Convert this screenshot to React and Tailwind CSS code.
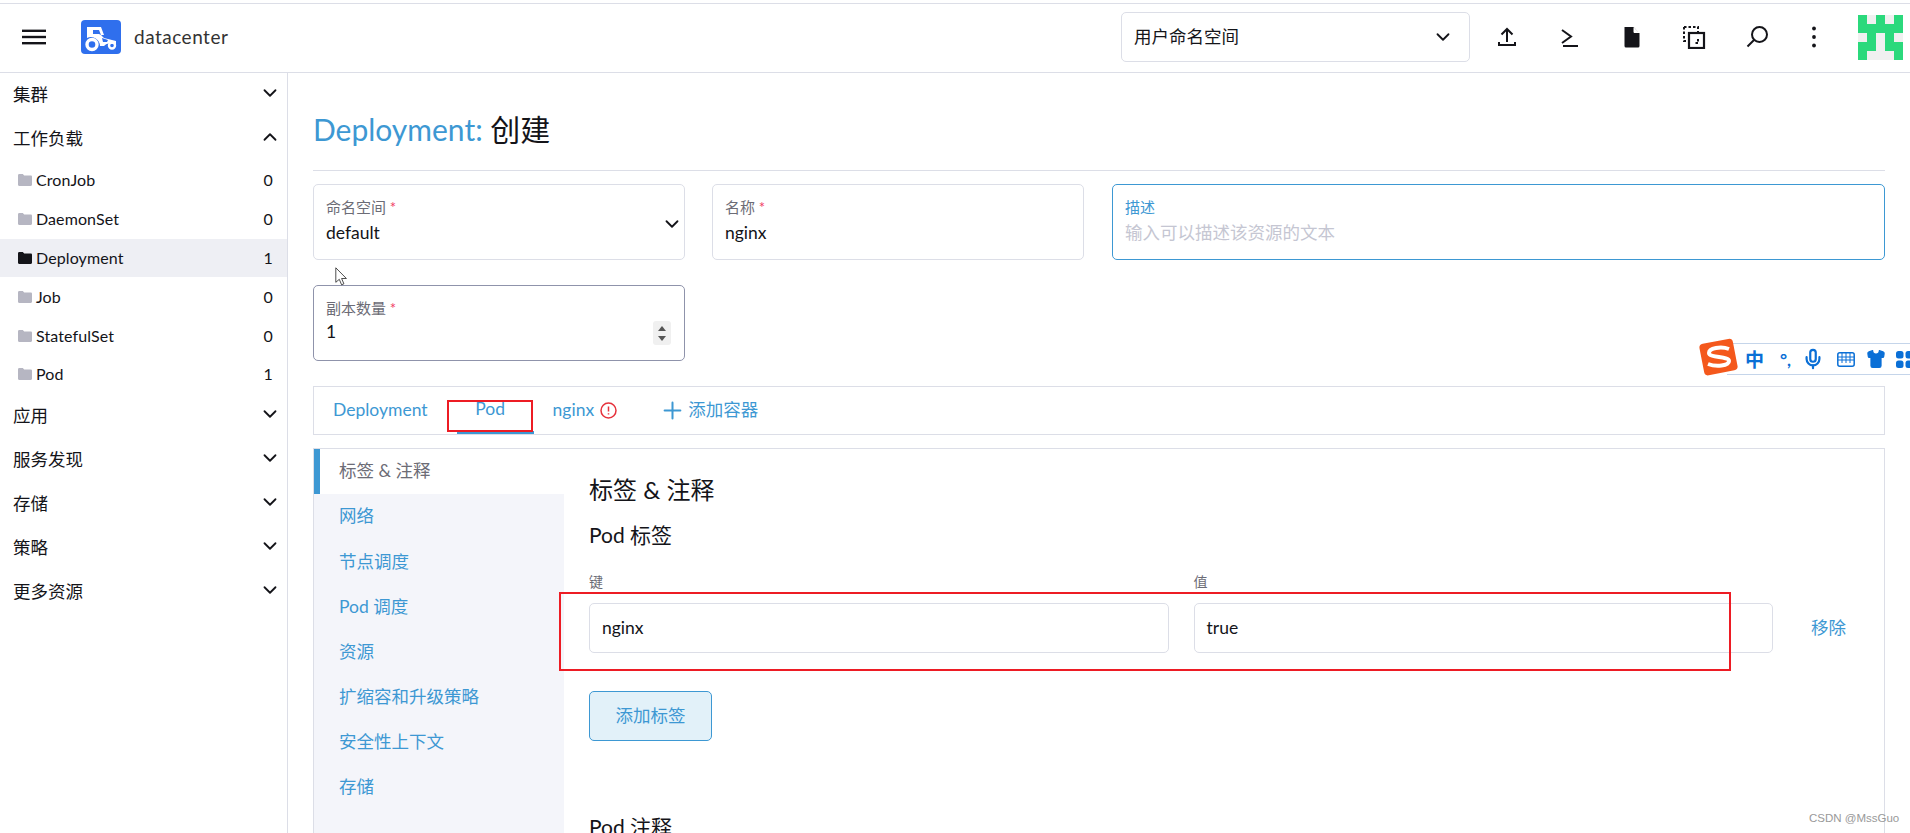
import { ChevronDown, ChevronUp, Mic, Plus, Shirt } from 'lucide-react';

const FONT = 'font-[Lato,"Noto_Sans_CJK_SC",sans-serif]';
const avatarRows = ['10101', '11111', '01010', '11011', '10001'];
const workloads = [
    { name: 'CronJob', count: 0 },
    { name: 'DaemonSet', count: 0 },
    { name: 'Deployment', count: 1, active: true },
    { name: 'Job', count: 0 },
    { name: 'StatefulSet', count: 0 },
    { name: 'Pod', count: 1 }
];
const sideTabs = ['网络', '节点调度', 'Pod 调度', '资源', '扩缩容和升级策略', '安全性上下文', '存储'];

function Logo() {
    return (
        <svg width="40" height="34" viewBox="0 0 40 34" className="shrink-0">
            <rect width="40" height="34" rx="4" fill="#2f6fed" />
            <path d="M6 7h14l3 8h-3l-2-5h-6v4H6z" fill="#fff" />
            <path d="M6 14h12l2 1 3 3 12 3v3h-5a6 6 0 0 0-7 2h-4a9 9 0 0 0-13-8z" fill="#fff" />
            <circle cx="11" cy="24.5" r="5" fill="none" stroke="#fff" strokeWidth="3.4" />
            <circle cx="31" cy="25.5" r="3" fill="none" stroke="#fff" strokeWidth="2.4" />
            <path d="M21 18l6 2-1 2h-4z" fill="#2f6fed" />
        </svg>
    );
}

function HeaderIcon({ children }) {
    return (
        <div className="flex items-center justify-center w-[62.4px]">
            <svg width="24" height="24" viewBox="0 0 24 24" fill="none" stroke="#141419" strokeWidth="2">
                {children}
            </svg>
        </div>
    );
}

function Folder({ dark }) {
    return (
        <svg width="14" height="12" viewBox="0 0 14 12" className="shrink-0" fill={dark ? '#141419' : '#b6b6c2'}>
            <path d="M0 1.5C0 .7.5 0 1.2 0h3.6l1.4 1.6h6.6c.7 0 1.2.5 1.2 1.2v8c0 .7-.5 1.2-1.2 1.2H1.2C.5 12 0 11.5 0 10.8z" />
        </svg>
    );
}

function NavGroup({ label, open }) {
    const Chevron = open ? ChevronUp : ChevronDown;
    return (
        <div className="flex items-center justify-between h-[44px] pl-[13px] pr-[6px] text-[17.5px] text-[#141419]">
            <span className="mt-[1px]">{label}</span>
            <Chevron size={22} strokeWidth={2} className="-mt-[4px] text-[#141419]" />
        </div>
    );
}

function Sidebar() {
    return (
        <aside className="w-[288px] shrink-0 border-r border-[#dcdee7]">
            <NavGroup label="集群" />
            <NavGroup label="工作负载" open />
            {workloads.map((item) => (
                <div
                    key={item.name}
                    className={`flex items-center h-[38.8px] pl-[18px] pr-[14px] text-[16px] tracking-[0.1px] text-[#141419] ${
                        item.active ? 'bg-[#eeeff4]' : ''
                    }`}
                >
                    <Folder dark={item.active} />
                    <span className="ml-[4px]">{item.name}</span>
                    <span className="ml-auto">{item.count}</span>
                </div>
            ))}
            <NavGroup label="应用" />
            <NavGroup label="服务发现" />
            <NavGroup label="存储" />
            <NavGroup label="策略" />
            <NavGroup label="更多资源" />
        </aside>
    );
}

function LabeledField({ label, required, className, children }) {
    return (
        <div className={`h-[76px] rounded-[5px] border bg-white pl-[12px] pr-[8px] pt-[12px] ${className}`}>
            <div className="text-[15px] leading-[20px] text-[#6c6c76]">
                {label}
                {required && <span className="text-[#f0405f]"> *</span>}
            </div>
            {children}
        </div>
    );
}

function KeyValue({ label, value }) {
    return (
        <div className="flex-1">
            <div className="text-[14px] leading-[20px] text-[#6c6c76]">{label}</div>
            <div className="flex items-center h-[50px] mt-[11px] pl-[12px] rounded-[5px] border border-[#dcdee7] text-[17.5px] text-[#141419]">
                {value}
            </div>
        </div>
    );
}

function SogouBar() {
    return (
        <div className="absolute left-[1699px] top-[338px] flex items-center w-[211px] h-[38px]">
            <div className="absolute left-[28px] right-0 top-[5px] h-[32px] bg-white border-y border-[#c5d5ea]" />
            <svg width="40" height="38" viewBox="0 0 40 38" className="absolute left-0 top-0">
                <rect x="2.5" y="3" width="34" height="32" rx="4" fill="#f4581c" transform="rotate(-11 20 19)" />
                <path d="M30 11C22 8 10 10 10 15c0 5 20 3 20 8 0 5-13 6-21 3" fill="none" stroke="#fff" strokeWidth="4" />
            </svg>
            <div className="absolute left-[46px] top-[6px] flex items-center h-[30px] text-[#0a6fd6]">
                <span className="text-[19px] font-bold leading-none">中</span>
                <span className="ml-[16px] text-[17px] font-bold leading-none">°,</span>
                <Mic size={22} strokeWidth={2.4} className="ml-[11px]" />
                <svg width="18" height="15" viewBox="0 0 18 15" className="ml-[13px]" fill="none" stroke="currentColor" strokeWidth="1.5">
                    <rect x=".8" y=".8" width="16.4" height="13.4" rx="2" />
                    <path d="M1 5h16M1 8h16M5 1v10M9 1v10M13 1v10" strokeWidth="1" />
                </svg>
                <Shirt size={20} fill="currentColor" strokeWidth={1.5} className="ml-[11px]" />
                <svg width="17" height="17" viewBox="0 0 17 17" className="ml-[10px]" fill="currentColor">
                    <rect width="7.5" height="7.5" rx="2.5" />
                    <rect x="9.5" width="7.5" height="7.5" rx="2.5" />
                    <rect y="9.5" width="7.5" height="7.5" rx="2.5" />
                    <rect x="9.5" y="9.5" width="7.5" height="7.5" rx="2.5" />
                </svg>
            </div>
        </div>
    );
}

export default function App() {
    return (
        <div className={`relative h-[833px] overflow-hidden bg-white ${FONT}`}>
            <div className="h-[4px] border-b border-[#dcdee7]" />
            <header className="flex items-center h-[69px] pb-[2px] border-b border-[#dcdee7]">
                <svg width="24" height="16" viewBox="0 0 24 16" className="ml-[22px] shrink-0" fill="#141419">
                    <rect width="24" height="2.4" y="0.6" />
                    <rect width="24" height="2.4" y="6.8" />
                    <rect width="24" height="2.4" y="13" />
                </svg>
                <div className="ml-[35px]">
                    <Logo />
                </div>
                <span className="ml-[13px] text-[19px] tracking-[0.5px] text-[#333]">datacenter</span>
                <div className="flex items-center justify-between w-[349px] h-[50px] ml-auto pl-[12px] pr-[15px] rounded-[5px] border border-[#dcdee7] text-[17.5px] text-[#141419]">
                    <span>用户命名空间</span>
                    <ChevronDown size={22} strokeWidth={2} />
                </div>
                <div className="flex items-center ml-[6px]">
                    <HeaderIcon>
                        <path d="M12 17V4M6.5 9.5 12 4l5.5 5.5M4 17v3h16v-3" />
                    </HeaderIcon>
                    <HeaderIcon>
                        <path d="M4 5l9 6.5L4 18M5 21h15" />
                    </HeaderIcon>
                    <HeaderIcon>
                        <path d="M4.500 2h9l6 6.500v12.500a1.500 1.500 0 0 1-1.500 1.500h-12a1.500 1.500 0 0 1-1.500-1.500z" fill="#141419" stroke="none" />
                        <path d="M14 2.500v5h5" stroke="#fff" strokeWidth="1" fill="#fff" />
                    </HeaderIcon>
                    <HeaderIcon>
                        <path d="M2 2h14v5M2 2v14h5" strokeDasharray="2.500 2" />
                        <rect x="7" y="8" width="15" height="15" strokeWidth="2.200" />
                        <path d="M16 14v4h-3" strokeDasharray="2.500 1.500" />
                    </HeaderIcon>
                    <HeaderIcon>
                        <circle cx="14.500" cy="9.500" r="7.500" />
                        <path d="M9 15l-6.500 6.500" />
                    </HeaderIcon>
                    <div className="flex items-center justify-center w-[52px]">
                        <svg width="24" height="24" viewBox="0 0 24 24" fill="#141419">
                            <circle cx="12" cy="3.500" r="1.900" />
                            <circle cx="12" cy="12" r="1.900" />
                            <circle cx="12" cy="20.500" r="1.900" />
                        </svg>
                    </div>
                </div>
                <div className="grid grid-cols-5 w-[45px] h-[45px] ml-[18px] mr-[7px] shrink-0">
                    {avatarRows.join('').split('').map((cell, index) => (
                        <div key={index} className={cell === '1' ? 'bg-[#2bd97c]' : 'bg-[#f0f0f0]'} />
                    ))}
                </div>
            </header>

            <div className="flex h-[760px]">
                <Sidebar />
                <main className="flex-1 min-w-0 pl-[25px] pr-[25px]">
                    <h1 className="h-[98px] pt-[33px] text-[30px] leading-[46px] border-b border-[#dcdee7] text-[#141419]">
                        <span className="text-[#3d98d3]">Deployment:</span> 创建
                    </h1>

                    <div className="flex mt-[13px]">
                        <LabeledField label="命名空间" required className="relative w-[372px] border-[#dcdee7]">
                            <div className="mt-[3px] text-[17.5px] leading-[25px] text-[#141419]">default</div>
                            <ChevronDown size={22} strokeWidth={2} className="absolute right-[1px] top-[28px] text-[#141419]" />
                        </LabeledField>
                        <LabeledField label="名称" required className="w-[372px] ml-[27px] border-[#dcdee7]">
                            <div className="mt-[3px] text-[17.5px] leading-[25px] text-[#141419]">nginx</div>
                        </LabeledField>
                        <div className="flex-1 h-[76px] ml-[28px] rounded-[5px] border border-[#3d98d3] pl-[12px] pt-[12px]">
                            <div className="text-[15px] leading-[20px] text-[#3d98d3]">描述</div>
                            <div className="mt-[3px] text-[17.5px] leading-[25px] text-[#c5c6d2]">输入可以描述该资源的文本</div>
                        </div>
                    </div>

                    <LabeledField label="副本数量" required className="w-[372px] mt-[25px] border-[#8f93ab]">
                        <div className="mt-[1px] text-[17.5px] leading-[25px] text-[#141419]">1</div>
                    </LabeledField>

                    <div className="flex items-center h-[49px] mt-[25px] pl-[19px] border border-[#dcdee7] text-[17.5px] text-[#3d98d3]">
                        <span>Deployment</span>
                        <div className="flex justify-center self-stretch items-center w-[77px] ml-[29px] pr-[10px] border-b-[3px] border-[#3d98d3]">Pod</div>
                        <span className="ml-[19px]">nginx</span>
                        <svg width="17" height="17" viewBox="0 0 17 17" className="ml-[6px]" fill="none" stroke="#e6323c" strokeWidth="1.500">
                            <circle cx="8.500" cy="8.500" r="7.500" />
                            <path d="M8.500 4.500v5M8.500 11.200v1.400" />
                        </svg>
                        <Plus size={27} strokeWidth={1.8} className="ml-[42px]" />
                        <span className="ml-[2px]">添加容器</span>
                    </div>

                    <div className="flex h-[400px] mt-[13px] border-t border-x border-[#dcdee7]">
                        <nav className="w-[250px] shrink-0 bg-[#f4f5fa] text-[17.5px] text-[#3d98d3]">
                            <div className="flex items-center h-[45px] pl-[19px] bg-white border-l-[6px] border-[#3d98d3] text-[#6c6c76]">
                                标签 &amp; 注释
                            </div>
                            {sideTabs.map((tab) => (
                                <div key={tab} className="flex items-center h-[45.1px] pl-[25px]">
                                    {tab}
                                </div>
                            ))}
                        </nav>
                        <section className="flex-1 min-w-0 pl-[25px] pr-[38px] pt-[24px] text-[#141419]">
                            <h2 className="text-[24px] leading-[34px]">标签 &amp; 注释</h2>
                            <h3 className="mt-[13px] text-[21px] leading-[30px]">Pod 标签</h3>
                            <div className="flex items-end mt-[22px]">
                                <div className="flex flex-1 gap-[25px]">
                                    <KeyValue label="键" value="nginx" />
                                    <KeyValue label="值" value="true" />
                                </div>
                                <span className="flex items-center h-[50px] ml-[38px] text-[17.5px] text-[#3d98d3]">移除</span>
                            </div>
                            <button className="block w-[123px] h-[50px] mt-[38px] rounded-[5px] border border-[#3d98d3] bg-[#e2f1f9] text-[17.5px] text-[#3d98d3]">
                                添加标签
                            </button>
                            <h3 className="mt-[71px] text-[21px] leading-[30px]">Pod 注释</h3>
                        </section>
                    </div>
                </main>
            </div>

            {/* 数字输入框的上下按钮 */}
            <div className="absolute left-[653px] top-[321px] flex flex-col items-center justify-center gap-[5px] w-[18px] h-[24px] rounded-[3px] bg-[#f0f0f0]">
                <div className="w-0 h-0 border-x-[4px] border-x-transparent border-b-[5px] border-b-[#555]" />
                <div className="w-0 h-0 border-x-[4px] border-x-transparent border-t-[5px] border-t-[#555]" />
            </div>

            {/* 鼠标指针 */}
            <svg width="13" height="19" viewBox="0 0 13 19" className="absolute left-[335px] top-[267px]" fill="#fff" stroke="#222" strokeWidth="0.800">
                <path d="M.8.8v14.500l3.500-3 2.300 5.500 2.300-1-2.300-5.300h4.800z" />
            </svg>

            {/* 截图上的红色标注框 */}
            <div className="absolute left-[447px] top-[400px] w-[86px] h-[32px] border-2 border-[#ed1c24]" />
            <div className="absolute left-[559px] top-[592px] w-[1172px] h-[79px] border-2 border-[#ed1c24]" />

            <SogouBar />

            <div className="absolute left-[1809px] top-[811px] text-[11.5px] leading-[14px] text-[#999] font-['Liberation_Sans',sans-serif]">
                CSDN @MssGuo
            </div>
        </div>
    );
}
